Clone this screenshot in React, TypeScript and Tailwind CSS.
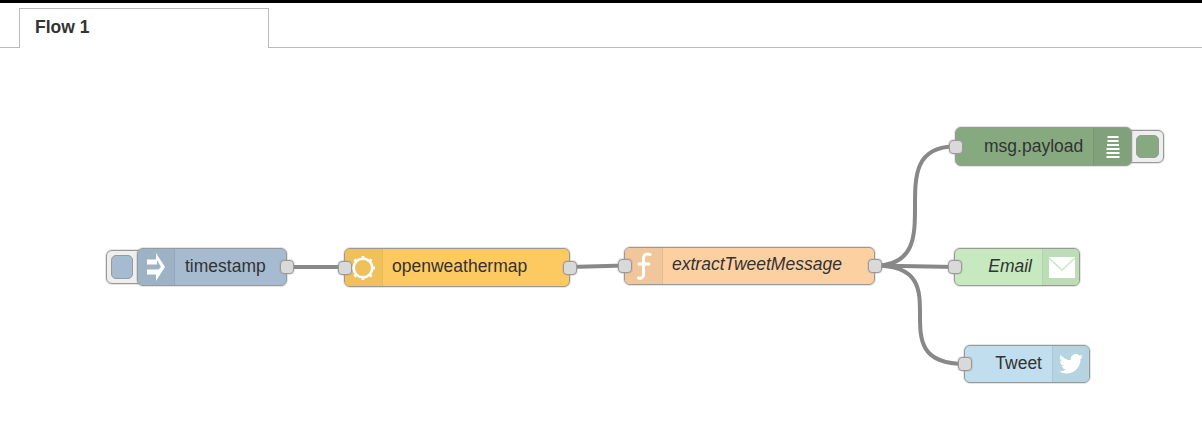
const font = "font-['Liberation_Sans',Arial,sans-serif]";
const glow = "shadow-[0_0_0_1px_rgba(153,153,153,0.25)]";

function Port({ side }: { side: "left" | "right" }) {
  return (
    <div
      className={
        side === "left"
          ? "absolute left-[-7px] top-1/2 -translate-y-1/2 w-[14px] h-[14px] rounded-[4px] bg-[#d9d9d9] border border-[#999] shadow-[0_0_0_1px_rgba(153,153,153,0.25)]"
          : "absolute right-[-8px] top-1/2 -translate-y-1/2 w-[14px] h-[14px] rounded-[4px] bg-[#d9d9d9] border border-[#999] shadow-[0_0_0_1px_rgba(153,153,153,0.25)]"
      }
    />
  );
}

function InjectIcon() {
  return (
    <svg width="18" height="28" viewBox="0 0 18 28" fill="#fff">
      <path d="M0 6.500h9V0l9 14-9 14v-6.500H0v-5h11.500L14 14l-4-7v4.500H0z" />
    </svg>
  );
}

function SunIcon() {
  return (
    <svg width="26" height="26" viewBox="0 0 26 26" fill="none" stroke="#fff">
      <circle cx="13" cy="13" r="9.300" strokeWidth="2.600" />
      <path
        d="M13 1v3M13 22v3M1 13h3M22 13h3M4.500 4.500l2.200 2.200M19.300 19.300l2.200 2.200M4.500 21.500l2.200-2.200M19.300 6.700l2.200-2.200"
        strokeWidth="2.800"
      />
    </svg>
  );
}

function FunctionIcon() {
  return (
    <svg width="18" height="30" viewBox="0 0 18 30" fill="none" stroke="#fff" strokeWidth="3" strokeLinecap="round">
      <path d="M15 3.500c-3.500-1.500-6.500 0-6.500 4v15.500c0 3.500-2 5-5 4" />
      <path d="M4 13h10" />
    </svg>
  );
}

function ListIcon() {
  return (
    <svg width="14" height="24" viewBox="0 0 14 24" fill="none" stroke="#fff" strokeWidth="2">
      <path d="M1.500 2h11M1.500 6h11M1 10h12M0.500 14h13M0.500 18h13M0.500 22h13" />
    </svg>
  );
}

function MailIcon() {
  return (
    <svg width="26" height="21" viewBox="0 0 26 21">
      <rect width="26" height="21" fill="#fff" />
      <path d="M0 1 13 13 26 1" fill="none" stroke="#c7e9c0" strokeWidth="1.500" />
    </svg>
  );
}

function TwitterIcon() {
  return (
    <svg width="24" height="20" viewBox="0 0 24 20" fill="#fff">
      <path d="M24 2.400c-.9.400-1.800.700-2.800.800 1-.600 1.800-1.600 2.200-2.700-1 .600-2 1-3.100 1.200A4.900 4.900 0 0 0 11.900 6.200 13.900 13.900 0 0 1 1.700.900a4.900 4.900 0 0 0 1.500 6.600c-.800 0-1.600-.200-2.200-.600v.100c0 2.400 1.700 4.400 3.900 4.800-.700.200-1.500.200-2.200.100.600 2 2.400 3.400 4.600 3.400A9.900 9.900 0 0 1 0 17.300 13.900 13.900 0 0 0 7.500 19.500c9 0 14-7.500 14-14v-.600c1-.700 1.800-1.600 2.500-2.500z" />
    </svg>
  );
}

export default function App() {
  return (
    <div className={`${font} w-[1202px] h-[448px] bg-white overflow-hidden text-[#333]`}>
      <div className="h-[3px] bg-black" />

      {/* Tabs */}
      <div className="h-[45px] border-b border-[#bbb] pl-[19px] pt-[5px]">
        <div className="w-[250px] h-[40px] border border-b-0 border-[#bbb] bg-white pl-[15px] pt-[8px] text-[17.5px] leading-[20px] font-bold">
          Flow 1
        </div>
      </div>

      {/* Canvas */}
      <div className="relative h-[400px]">
        <svg className="absolute left-0 top-[-48px]" width="1202" height="448" fill="none" stroke="#888" strokeWidth="4">
          <path d="M287 267H345" />
          <path d="M570 267L625 265.500" />
          <path d="M875 265.500C955 265.500 875 146.500 955 146.500" />
          <path d="M875 265.500L955 267" />
          <path d="M875 265.500C965 265.500 875 364 965 364" />
        </svg>

        {/* timestamp */}
        <div className={`absolute left-[106px] top-[202px] w-[40px] h-[34px] rounded-[6px] bg-[#eee] border border-[#999] pl-[4px] pt-[4px] ${glow}`}>
          <div className="w-[22px] h-[24px] rounded-[5px] bg-[#a6bbcf] border border-[#999]" />
        </div>
        <div className={`absolute left-[137px] top-[200px] w-[150px] h-[38px] rounded-[6px] bg-[#a6bbcf] border border-[#999] flex text-[17.5px] ${glow}`}>
          <div className="w-[37px] shrink-0 rounded-l-[5px] bg-[#9eb2c5] border-r border-[#95a8ba] flex items-center justify-center pr-[1px]">
            <InjectIcon />
          </div>
          <div className="pl-[10px] leading-[34px]">timestamp</div>
          <Port side="right" />
        </div>

        {/* openweathermap */}
        <div className={`absolute left-[344px] top-[200px] w-[226px] h-[39px] rounded-[6px] bg-[#fdca61] border border-[#999] flex text-[17.5px] ${glow}`}>
          <div className="w-[38px] shrink-0 rounded-l-[5px] bg-[#f0c05c] border-r border-[#e9ba59] flex items-center justify-center pr-[2px]">
            <SunIcon />
          </div>
          <div className="pl-[9px] leading-[35px]">openweathermap</div>
          <Port side="left" />
          <Port side="right" />
        </div>

        {/* extractTweetMessage */}
        <div className={`absolute left-[624px] top-[199px] w-[251px] h-[38px] rounded-[6px] bg-[#fdd0a2] border border-[#999] flex text-[17.5px] italic ${glow}`}>
          <div className="w-[38px] shrink-0 rounded-l-[5px] bg-[#f0c69a] border-r border-[#e4bb92] flex items-center justify-center">
            <FunctionIcon />
          </div>
          <div className="pl-[9px] leading-[32px]">extractTweetMessage</div>
          <Port side="left" />
          <Port side="right" />
        </div>

        {/* msg.payload */}
        <div className={`absolute left-[1120px] top-[82px] w-[44px] h-[33px] rounded-[6px] bg-[#eee] border border-[#999] pl-[15px] pt-[4px] ${glow}`}>
          <div className="w-[23px] h-[23px] rounded-[5px] bg-[#87a980] border border-[#999]" />
        </div>
        <div className={`absolute left-[955px] top-[79px] w-[177px] h-[39px] rounded-[6px] bg-[#87a980] border border-[#999] flex text-[17.5px] ${glow}`}>
          <div className="pl-[28px] w-[137px] leading-[36px]">msg.payload</div>
          <div className="flex-1 rounded-r-[5px] bg-[#80a17a] border-l border-[#799872] flex items-center justify-center">
            <ListIcon />
          </div>
          <Port side="left" />
        </div>

        {/* Email */}
        <div className={`absolute left-[954px] top-[200px] w-[126px] h-[38px] rounded-[6px] bg-[#c7e9c0] border border-[#999] flex text-[17.5px] italic ${glow}`}>
          <div className="w-[87px] text-right pr-[10px] leading-[35px]">Email</div>
          <div className="flex-1 rounded-r-[5px] bg-[#bdddb6] border-l border-[#b3d2ad] flex items-center justify-center pl-[1px]">
            <MailIcon />
          </div>
          <Port side="left" />
        </div>

        {/* Tweet */}
        <div className={`absolute left-[964px] top-[297px] w-[126px] h-[38px] rounded-[6px] bg-[#c0deed] border border-[#999] flex text-[17.5px] ${glow}`}>
          <div className="w-[87px] text-right pr-[10px] leading-[34px]">Tweet</div>
          <div className="flex-1 rounded-r-[5px] bg-[#b6d3e1] border-l border-[#adc8d5] flex items-center justify-center">
            <TwitterIcon />
          </div>
          <Port side="left" />
        </div>
      </div>
    </div>
  );
}
